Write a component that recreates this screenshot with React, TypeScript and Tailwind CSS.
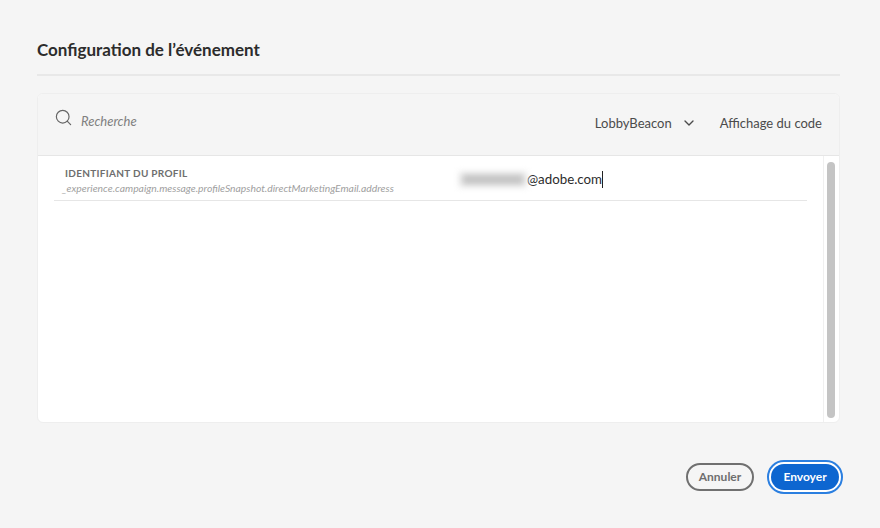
import { ChevronDown, Search } from "lucide-react";

const font = { fontFamily: '"Lato", "Open Sans", sans-serif' };

export default function App() {
  return (
    <div className="flex h-[528px] w-[880px] flex-col overflow-hidden bg-[#f5f5f5] pl-[37px] pr-[40px]" style={font}>
      <div className="flex h-[76px] flex-none flex-col justify-end border-b-2 border-[#e8e8e8] pb-[13px]">
        <h1 className="text-[17px] font-bold leading-[22px] text-[#2c2c2c]">Configuration de l’événement</h1>
      </div>

      <div className="mt-[17px] flex h-[330px] w-[803px] flex-none flex-col overflow-hidden rounded-[6px] border border-[#eeeeee] bg-white">
        <div className="flex h-[62px] flex-none border-b border-[#e6e6e6] bg-[#f5f5f5] pl-[16px] pr-[17px]">
          <Search className="mt-[14px] h-[19px] w-[19px] text-[#666666]" strokeWidth={1.5} />
          <span className="ml-[8px] mt-[19px] text-[13px] leading-[16px] italic text-[#808080]">Recherche</span>
          <span className="ml-auto mt-[20px] text-[13px] leading-[18px] text-[#4b4b4b]">LobbyBeacon</span>
          <ChevronDown className="ml-[9px] mt-[21px] h-[16px] w-[16px] text-[#4b4b4b]" strokeWidth={2} />
          <span className="ml-[23px] mt-[20px] text-[13px] leading-[18px] text-[#4b4b4b]">Affichage du code</span>
        </div>

        <div className="flex min-h-0 flex-1">
          <div className="flex-1 pl-[16px] pr-[16px]">
            <div className="flex h-[45px] border-b border-[#e6e6e6]">
              <div className="w-[405px] pt-[11px]">
                <div className="pl-[11px] text-[10px] font-bold leading-[13px] tracking-[0.3px] text-[#6e6e6e]">IDENTIFIANT DU PROFIL</div>
                <div className="pl-[8px] pt-[1px] text-[10.35px] italic leading-[14px] text-[#a0a0a0]">_experience.campaign.message.profileSnapshot.directMarketingEmail.address</div>
              </div>
              <div className="flex h-[46px] items-center pt-[1px] text-[13.3px] text-[#2c2c2c]">
                <span className="flex h-[15px] w-[68px] items-center justify-center bg-[#e6e6e6] blur-[3px]">
                  <span className="h-[9px] w-[60px] bg-[#c2c2c2]" />
                </span>
                <span>@adobe.com</span>
                <span className="h-[17px] w-px bg-[#222222]" />
              </div>
            </div>
          </div>
          <div className="w-[16px] flex-none border-l border-[#f0f0f0] pl-[3px] pt-[6px]">
            <div className="h-[256px] w-[8px] rounded-full bg-[#c4c4c4]" />
          </div>
        </div>
      </div>

      <div className="-mr-[3px] mt-[37px] flex flex-none items-center justify-end gap-[13px]">
        <button className="h-[28px] w-[68px] rounded-full border-2 border-[#707070] text-[12px] font-bold text-[#6e6e6e]">Annuler</button>
        <div className="rounded-full border-2 border-[#2b7fe0] bg-white p-[2px]">
          <button className="block h-[26px] w-[68px] rounded-full bg-[#0d66d0] text-[12px] font-bold text-white">Envoyer</button>
        </div>
      </div>
    </div>
  );
}
